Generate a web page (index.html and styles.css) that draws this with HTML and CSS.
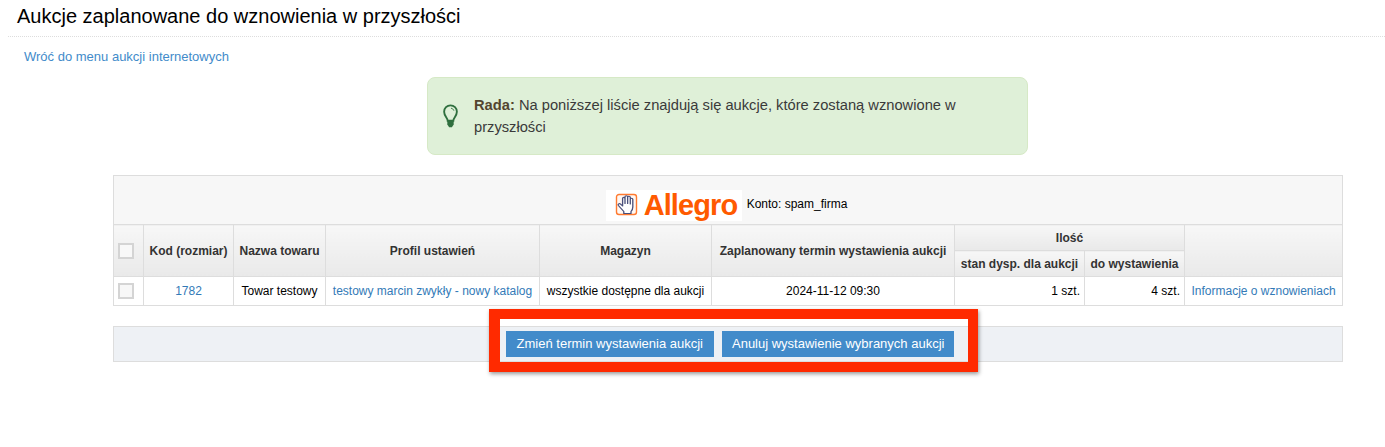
FILE: index.html
```html
<!DOCTYPE html>
<html lang="pl">
<head>
<meta charset="utf-8">
<title>Aukcje zaplanowane do wznowienia w przyszłości</title>
<link rel="stylesheet" href="styles.css">
</head>
<body>
<h1 class="title">Aukcje zaplanowane do wznowienia w przyszłości</h1>
<a class="back" href="#">Wróć do menu aukcji internetowych</a>
<main class="content">
  <div class="alert">
    <svg class="bulb" viewBox="0 0 16 25" width="15" height="24" aria-hidden="true">
      <path d="M5 17.5C5 14.5 1.2 12.5 1.2 7.9A6.8 6.800 0 0 1 14.8 7.900C14.8 12.5 11 14.5 11 17.500Z" fill="none" stroke="#2f6f3e" stroke-width="2"/>
      <path d="M4.600 17.500H11.400V21.500L9.500 24.500H6.500L4.600 21.500Z" fill="#2f6f3e"/>
      <path d="M8.500 4.200C10 4.400 11.200 5.400 11.600 6.800" fill="none" stroke="#2f6f3e" stroke-width="1"/>
    </svg>
    <p class="alert-text"><b>Rada:</b> Na poniższej liście znajdują się aukcje, które zostaną wznowione w przyszłości</p>
  </div>
  <table class="grid">
    <colgroup>
      <col class="c1"><col class="c2"><col class="c3"><col class="c4"><col class="c5"><col class="c6"><col class="c7"><col class="c8"><col class="c9">
    </colgroup>
    <thead>
      <tr>
        <th class="brand-cell" colspan="9">
          <div class="brand-row">
            <span class="logo">
              <svg viewBox="0 0 26 26" width="26" height="26" aria-hidden="true">
                <rect x="3.500" y="1.500" width="20" height="20" rx="2.500" fill="#fff8f3" stroke="#ff7a30" stroke-width="1.400"/>
                <path transform="translate(0 -1) scale(1.2 1)" d="M9 19.500L4.500 13.500C3.700 12.200 5.300 11 6.300 12.100L8 14V6.500C8 5 10 5 10 6.500V11.500V4.800C10 3.300 12.200 3.300 12.200 4.800V11.500V5.300C12.200 3.800 14.400 3.800 14.400 5.300V12V7.300C14.400 5.800 16.500 5.800 16.500 7.300V15C16.500 17 15.800 18.500 15 19.500V21.500H9Z" fill="#fff" stroke="#4a4f7a" stroke-width="1.100" stroke-linejoin="round"/>
              </svg>
              <span class="logo-word">Allegro</span>
            </span>
            <span class="account">Konto: spam_firma</span>
          </div>
        </th>
      </tr>
      <tr class="head">
        <th rowspan="2"><span class="check"></span></th>
        <th rowspan="2">Kod (rozmiar)</th>
        <th rowspan="2">Nazwa towaru</th>
        <th rowspan="2">Profil ustawień</th>
        <th rowspan="2">Magazyn</th>
        <th rowspan="2">Zaplanowany termin wystawienia aukcji</th>
        <th colspan="2">Ilość</th>
        <th rowspan="2"></th>
      </tr>
      <tr class="head">
        <th>stan dysp. dla aukcji</th>
        <th>do wystawienia</th>
      </tr>
    </thead>
    <tbody>
      <tr>
        <td><span class="check"></span></td>
        <td><a href="#">1782</a></td>
        <td>Towar testowy</td>
        <td><a href="#">testowy marcin zwykły - nowy katalog</a></td>
        <td>wszystkie dostępne dla aukcji</td>
        <td>2024-11-12 09:30</td>
        <td class="num">1 szt.</td>
        <td class="num">4 szt.</td>
        <td><a href="#">Informacje o wznowieniach</a></td>
      </tr>
    </tbody>
  </table>
  <div class="bar">
    <button class="btn btn-first" type="button">Zmień termin wystawienia aukcji</button>
    <button class="btn" type="button">Anuluj wystawienie wybranych aukcji</button>
    <div class="highlight"></div>
  </div>
</main>
</body>
</html>
```
FILE: styles.css
```css
* { box-sizing: border-box; }
html, body { margin: 0; padding: 0; }
body {
  background: #fff;
  font-family: "Liberation Sans", Arial, sans-serif;
  font-size: 12px;
  color: #000;
  height: 447px;
  overflow: hidden;
}
a { color: #337ab7; text-decoration: none; }
.title {
  margin: 0 0 0 8px;
  padding: 5px 0 0 9px;
  height: 37px;
  font-size: 20px;
  line-height: 23px;
  font-weight: 400;
  color: #000;
  border-bottom: 1px dotted #ddd;
}
.back {
  display: block;
  margin: 12px 0 0 24px;
  font-size: 13px;
  line-height: 16px;
  color: #428bca;
}
.content {
  margin: 0 42px 0 113px;
}
.alert {
  display: flex;
  align-items: center;
  width: 601px;
  height: 78px;
  margin: 12px 0 20px 314px;
  padding: 0 15px;
  background: #dff0d8;
  border: 1px solid #d6e9c6;
  border-radius: 8px;
}
.bulb { flex: none; margin: 0 16px 0 0; }
.alert-text {
  margin: 0;
  width: 530px;
  font-size: 14.7px;
  line-height: 22px;
  color: #3a3a3a;
}
.alert-text b { color: #54452f; }
.grid {
  width: 1229px;
  border-collapse: collapse;
  table-layout: fixed;
}
.c1 { width: 30px; }
.c2 { width: 90px; }
.c3 { width: 92px; }
.c4 { width: 214px; }
.c5 { width: 172px; }
.c6 { width: 243px; }
.c7 { width: 130px; }
.c8 { width: 100px; }
.c9 { width: 158px; }
.grid th, .grid td {
  border: 1px solid #ddd;
  padding: 0 2px;
  text-align: center;
  white-space: nowrap;
  font-size: 12px;
}
.grid th { color: #333; font-weight: 700; }
.brand-cell { height: 49px; background: #f7f7f7; }
.grid .brand-cell { padding: 0; }
.brand-row {
  display: flex;
  align-items: center;
  justify-content: center;
  gap: 5px;
  padding: 11px 3px 0 0;
  height: 48px;
}
.logo {
  display: inline-flex;
  align-items: center;
  gap: 5px;
  width: 136px;
  height: 31px;
  padding-left: 7px;
  background: #fff;
}
.logo-word {
  font-size: 29px;
  line-height: 31px;
  font-weight: 700;
  letter-spacing: -0.9px;
  color: #ff5a00;
}
.account { margin-bottom: 4px; font-weight: 400; color: #000; }
.head th {
  height: 26px;
  background: linear-gradient(#f7f7f7, #e9e9e9);
}
.grid td { height: 29px; color: #000; }
.grid td.num { text-align: right; padding-right: 4px; }
.check {
  display: block;
  width: 16px;
  height: 16px;
  margin: 0 0 0 2px;
  background: #f7f7f7;
  border: 2px solid #d4d4d4;
}
.head .check { background: #f8f8f8; }
.bar {
  position: relative;
  display: flex;
  justify-content: center;
  gap: 8px;
  height: 36px;
  margin-top: 20px;
  padding: 4px 0 0 4px;
  background: #eef1f5;
  border: 1px solid #ddd;
}
.btn {
  height: 26px;
  padding: 0 10px 2px;
  background: #428bca;
  border: 0;
  color: #fff;
  font-family: "Liberation Sans", Arial, sans-serif;
  font-size: 13px;
}
.btn-first { padding: 0 11px 2px; }
.highlight {
  position: absolute;
  left: 375px;
  top: -18px;
  width: 489px;
  height: 63px;
  border-style: solid;
  border-color: #ff2a00;
  border-width: 10px 10px 10px 11px;
  box-shadow: 1px 2px 4px rgba(0, 0, 0, 0.4);
  pointer-events: none;
}
```
